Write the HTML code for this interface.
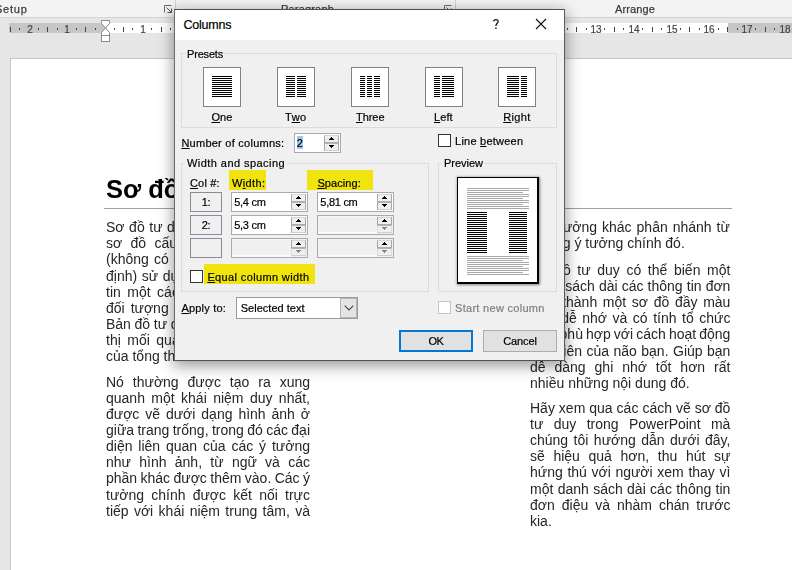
<!DOCTYPE html>
<html>
<head>
<meta charset="utf-8">
<title>Columns</title>
<style>
*{box-sizing:border-box;margin:0;padding:0}
html,body{width:792px;height:570px;overflow:hidden}
body{position:relative;background:#e6e6e6;font-family:"Liberation Sans",sans-serif;font-size:12px;color:#000}
.abs{position:absolute}
#ribbon{left:0;top:0;width:792px;height:18px;background:#f3f3f3;border-bottom:1px solid #d6d6d6}
.rlabel{position:absolute;top:1px;font-size:12px;color:#444;white-space:nowrap;line-height:14px}
.rsep{position:absolute;top:0;width:1px;height:12px;background:#cfcfcf}
#ruler{left:9px;top:23px;width:783px;height:10px;background:#fff}
#ruler .g{position:absolute;top:0;height:10px;background:#c6c6c6}
.rn{position:absolute;will-change:transform;-webkit-text-stroke-width:0.2px;font-size:10px;line-height:12px;color:#444;width:20px;text-align:center}
.tk{position:absolute;top:27px;width:1px;height:5px;background:#444}
.dt{position:absolute;top:28px;width:1px;height:2px;background:#444}
#page{left:10px;top:58px;width:800px;height:520px;background:#fff;border:1px solid #c6c6c6}
.ln{position:absolute;font-size:14px;line-height:16px;height:17px;color:#262626;white-space:nowrap;will-change:transform}
#dlg{left:174px;top:9px;width:391px;height:352px;background:#f0f0f0;border:1px solid #505050;border-left-color:#6a6a6a;border-right-color:#5c5c5c;box-shadow:0 4px 14px 1px rgba(0,0,0,.40)}
#title{left:0;top:0;width:389px;height:30px;background:#fff}
.t{position:absolute;white-space:nowrap;font-size:11px;line-height:14px;color:#000;-webkit-text-stroke-width:0.2px}
u{text-decoration:underline;text-underline-offset:1px;text-decoration-thickness:1px}
.grp{position:absolute;border:1px solid #dcdcdc}
.lg{position:absolute;padding:0 2px;background:#f0f0f0;font-size:12px;line-height:14px;white-space:nowrap}
.pbtn{position:absolute;width:38px;height:40px;background:#fff;border:1px solid #7c8190}
.pl{position:absolute;height:1px;background:#000}
.inp{position:absolute;height:20px;background:#fff;border:1px solid #7a7a7a}
.inp.dis{background:#f0f0f0;border-color:#c4c4c4}
.inp .v{position:absolute;left:4px;top:2px;font-size:12px;line-height:14px;white-space:nowrap}
.spin{position:absolute;right:0;top:0;width:16px;height:18px;background:#f0f0f0;border-left:1px solid #d0d0d0}
.cb{position:absolute;width:13px;height:13px;background:#fff;border:1px solid #333}
.btn{position:absolute;height:22px;background:#e1e1e1;border:1px solid #adadad;text-align:center;font-size:12px;line-height:19px}
.hl{position:absolute;background:#efe40e}
</style>
</head>
<body>
<div id="ribbon" class="abs">
<div class="t" style="left:-5.0px;top:2px;color:#3c3c3c;letter-spacing:0.770px;will-change:transform;-webkit-text-stroke-width:0.25px">Setup</div>
<div class="t" style="left:281px;top:2px;color:#3c3c3c;letter-spacing:0.181px;will-change:transform;-webkit-text-stroke-width:0.25px">Paragraph</div>
<div class="t" style="left:615.4px;top:2px;color:#3c3c3c;letter-spacing:0.123px;will-change:transform;-webkit-text-stroke-width:0.25px">Arrange</div>
<div class="rsep" style="left:175px"></div>
<div class="rsep" style="left:455px"></div>
<svg class="abs" style="left:164px;top:5px" width="9" height="9" viewBox="0 0 9 9"><path d="M0.5 7.5V0.5H7.5" fill="none" stroke="#6a6a6a" stroke-width="1"/><path d="M2.5 2.5L7 7M7.5 3.5V7.5H3.5" fill="none" stroke="#555" stroke-width="1"/></svg>
<svg class="abs" style="left:444px;top:5px" width="9" height="9" viewBox="0 0 9 9"><path d="M0.5 7.5V0.5H7.5" fill="none" stroke="#6a6a6a" stroke-width="1"/><path d="M2.5 2.5L7 7M7.5 3.5V7.5H3.5" fill="none" stroke="#555" stroke-width="1"/></svg>
</div>
<div id="ruler" class="abs">
<div class="g" style="left:0;width:96.5px"></div>
<div class="g" style="left:718.5px;width:80px"></div>
</div>
<div class="rn" style="left:19.6px;top:23.5px">2</div>
<div class="rn" style="left:57.3px;top:23.5px">1</div>
<div class="rn" style="left:132.9px;top:23.5px">1</div>
<div class="rn" style="left:170.6px;top:23.5px">2</div>
<div class="rn" style="left:208.4px;top:23.5px">3</div>
<div class="rn" style="left:246.1px;top:23.5px">4</div>
<div class="rn" style="left:283.9px;top:23.5px">5</div>
<div class="rn" style="left:321.7px;top:23.5px">6</div>
<div class="rn" style="left:359.4px;top:23.5px">7</div>
<div class="rn" style="left:397.2px;top:23.5px">8</div>
<div class="rn" style="left:434.9px;top:23.5px">9</div>
<div class="rn" style="left:472.7px;top:23.5px">10</div>
<div class="rn" style="left:510.5px;top:23.5px">11</div>
<div class="rn" style="left:548.2px;top:23.5px">12</div>
<div class="rn" style="left:586.0px;top:23.5px">13</div>
<div class="rn" style="left:623.7px;top:23.5px">14</div>
<div class="rn" style="left:661.5px;top:23.5px">15</div>
<div class="rn" style="left:699.3px;top:23.5px">16</div>
<div class="rn" style="left:737.0px;top:23.5px">17</div>
<div class="rn" style="left:774.8px;top:23.5px">18</div>
<div class="tk" style="left:10px"></div>
<div class="dt" style="left:19px"></div>
<div class="dt" style="left:38px"></div>
<div class="tk" style="left:47px"></div>
<div class="dt" style="left:57px"></div>
<div class="dt" style="left:76px"></div>
<div class="tk" style="left:85px"></div>
<div class="dt" style="left:95px"></div>
<div class="dt" style="left:114px"></div>
<div class="tk" style="left:123px"></div>
<div class="dt" style="left:132px"></div>
<div class="dt" style="left:151px"></div>
<div class="tk" style="left:161px"></div>
<div class="dt" style="left:170px"></div>
<div class="dt" style="left:189px"></div>
<div class="tk" style="left:199px"></div>
<div class="dt" style="left:208px"></div>
<div class="dt" style="left:227px"></div>
<div class="tk" style="left:236px"></div>
<div class="dt" style="left:246px"></div>
<div class="dt" style="left:265px"></div>
<div class="tk" style="left:274px"></div>
<div class="dt" style="left:283px"></div>
<div class="dt" style="left:302px"></div>
<div class="tk" style="left:312px"></div>
<div class="dt" style="left:321px"></div>
<div class="dt" style="left:340px"></div>
<div class="tk" style="left:350px"></div>
<div class="dt" style="left:359px"></div>
<div class="dt" style="left:378px"></div>
<div class="tk" style="left:387px"></div>
<div class="dt" style="left:397px"></div>
<div class="dt" style="left:416px"></div>
<div class="tk" style="left:425px"></div>
<div class="dt" style="left:435px"></div>
<div class="dt" style="left:453px"></div>
<div class="tk" style="left:463px"></div>
<div class="dt" style="left:472px"></div>
<div class="dt" style="left:491px"></div>
<div class="tk" style="left:501px"></div>
<div class="dt" style="left:510px"></div>
<div class="dt" style="left:529px"></div>
<div class="tk" style="left:538px"></div>
<div class="dt" style="left:548px"></div>
<div class="dt" style="left:567px"></div>
<div class="tk" style="left:576px"></div>
<div class="dt" style="left:586px"></div>
<div class="dt" style="left:604px"></div>
<div class="tk" style="left:614px"></div>
<div class="dt" style="left:623px"></div>
<div class="dt" style="left:642px"></div>
<div class="tk" style="left:652px"></div>
<div class="dt" style="left:661px"></div>
<div class="dt" style="left:680px"></div>
<div class="tk" style="left:689px"></div>
<div class="dt" style="left:699px"></div>
<div class="dt" style="left:718px"></div>
<div class="tk" style="left:727px"></div>
<div class="dt" style="left:737px"></div>
<div class="dt" style="left:755px"></div>
<div class="tk" style="left:765px"></div>
<div class="dt" style="left:774px"></div>
<div class="dt" style="left:793px"></div>
<svg class="abs" style="left:100px;top:19px" width="12" height="24" viewBox="100 19 12 24"><path d="M101.5 20.5H109.5V23.5L105.5 28L101.5 23.5Z" fill="#fff" stroke="#8c8c8c"/><path d="M105.5 28L109.5 32.5V35.5H101.5V32.5Z" fill="#fff" stroke="#8c8c8c"/><rect x="101.5" y="35.5" width="8" height="6" fill="#fff" stroke="#8c8c8c"/></svg>
<div id="page" class="abs"></div>
<div class="abs" style="left:106.2px;top:173.6px;font-size:25.5px;line-height:30px;font-weight:bold;color:#000;white-space:nowrap;will-change:transform">Sơ đồ tư duy là gì?</div>
<div class="abs" style="left:104px;top:208px;width:628px;height:1px;background:#97a1b0"></div>
<div class="ln" style="left:106.2px;top:219.05px;word-spacing:0.700px">Sơ đồ tư duy (Mindmap) là một dạng</div>
<div class="ln" style="left:106.2px;top:235.20px;word-spacing:4.451px">sơ đồ cấu trúc phân cấp bậc</div>
<div class="ln" style="left:106.2px;top:251.35px;word-spacing:1.400px">(không có hình thức nào cố</div>
<div class="ln" style="left:106.2px;top:267.50px;word-spacing:0.700px">định) sử dụng để trực quan thông</div>
<div class="ln" style="left:106.2px;top:283.65px;word-spacing:2.600px">tin một cách tổng thể nhất</div>
<div class="ln" style="left:106.2px;top:299.80px;word-spacing:2.107px">đối tượng hoặc vấn đề nào đó.</div>
<div class="ln" style="left:106.2px;top:315.95px;word-spacing:-0.211px">Bản đồ tư duy thường được hiển</div>
<div class="ln" style="left:106.2px;top:332.10px;word-spacing:2.602px">thị mối quan hệ giữa các phần</div>
<div class="ln" style="left:106.2px;top:348.25px">của tổng thể.</div>
<div class="ln" style="left:106.2px;top:373.95px;word-spacing:5.047px">Nó thường được tạo ra xung</div>
<div class="ln" style="left:106.2px;top:390.04px;word-spacing:2.506px">quanh một khái niệm duy nhất,</div>
<div class="ln" style="left:106.2px;top:406.13px;word-spacing:2.026px">được vẽ dưới dạng hình ảnh ở</div>
<div class="ln" style="left:106.2px;top:422.22px;word-spacing:-0.510px">giữa trang trống, trong đó các đại</div>
<div class="ln" style="left:106.2px;top:438.31px;word-spacing:1.979px">diện liên quan của các ý tưởng</div>
<div class="ln" style="left:106.2px;top:454.40px;word-spacing:4.406px">như hình ảnh, từ ngữ và các</div>
<div class="ln" style="left:106.2px;top:470.49px;word-spacing:-0.482px">phần khác được thêm vào. Các ý</div>
<div class="ln" style="left:106.2px;top:486.58px;word-spacing:3.331px">tưởng chính được kết nối trực</div>
<div class="ln" style="left:106.2px;top:502.67px;word-spacing:1.474px">tiếp với khái niệm trung tâm, và</div>
<div class="ln" style="right:61.80px;top:219.05px;word-spacing:1.100px">tưởng khác phân nhánh từ</div>
<div class="ln" style="left:529.8px;top:235.45px">những ý tưởng chính đó.</div>
<div class="ln" style="left:529.8px;top:261.85px;word-spacing:2.740px">Sơ đồ tư duy có thể biến một</div>
<div class="ln" style="left:529.8px;top:277.99px;word-spacing:0.215px">danh sách dài các thông tin đơn</div>
<div class="ln" style="left:529.8px;top:294.13px;word-spacing:1.775px">điệu thành một sơ đồ đầy màu</div>
<div class="ln" style="left:529.8px;top:310.27px;word-spacing:1.629px">sắc, dễ nhớ và có tính tổ chức</div>
<div class="ln" style="left:529.8px;top:326.41px;word-spacing:-0.795px">cao, phù hợp với cách hoạt động</div>
<div class="ln" style="left:529.8px;top:342.55px;word-spacing:0.572px">tự nhiên của não bạn. Giúp bạn</div>
<div class="ln" style="left:529.8px;top:358.69px;word-spacing:5.041px">dễ dàng ghi nhớ tốt hơn rất</div>
<div class="ln" style="left:529.8px;top:374.83px">nhiều những nội dung đó.</div>
<div class="ln" style="left:529.8px;top:399.85px;word-spacing:0.082px">Hãy xem qua các cách vẽ sơ đồ</div>
<div class="ln" style="left:529.8px;top:415.98px;word-spacing:6.514px">tư duy trong PowerPoint mà</div>
<div class="ln" style="left:529.8px;top:432.11px;word-spacing:1.574px">chúng tôi hướng dẫn dưới đây,</div>
<div class="ln" style="left:529.8px;top:448.24px;word-spacing:4.752px">sẽ hiệu quả hơn, thu hút sự</div>
<div class="ln" style="left:529.8px;top:464.37px;word-spacing:0.757px">hứng thú với người xem thay vì</div>
<div class="ln" style="left:529.8px;top:480.50px;word-spacing:0.452px">một danh sách dài các thông tin</div>
<div class="ln" style="left:529.8px;top:496.63px;word-spacing:3.089px">đơn điệu và nhàm chán trước</div>
<div class="ln" style="left:529.8px;top:512.76px">kia.</div>
<div id="dlg" class="abs"><div id="title" class="abs"></div></div>
<div class="t" style="left:183.4px;top:17.6px;font-size:12.5px;letter-spacing:-0.190px">Columns</div>
<svg class="abs" style="left:492px;top:18px" width="8" height="12" viewBox="0 0 8 12"><path d="M1.7 3.4C1.7 0.9 6.2 0.9 6.2 3.3C6.2 5.3 3.9 5.4 3.9 8.1" fill="none" stroke="#111" stroke-width="1.25"/><rect x="3.2" y="9.5" width="1.4" height="1.5" fill="#111"/></svg>
<svg class="abs" style="left:535px;top:18px" width="12" height="12" viewBox="0 0 12 12"><path d="M1 1L11 11M11 1L1 11" stroke="#111" stroke-width="1.1" fill="none"/></svg>
<div class="grp" style="left:181px;top:53px;width:376px;height:75px"></div>
<div class="abs" style="left:186px;top:52px;width:38px;height:3px;background:#f0f0f0"></div>
<div class="t" style="left:187px;top:47px;letter-spacing:-0.185px">Presets</div>
<div class="pbtn" style="left:203px;top:67px"></div>
<div class="pl" style="left:212px;top:76px;width:20px"></div>
<div class="pl" style="left:212px;top:78px;width:20px"></div>
<div class="pl" style="left:212px;top:80px;width:20px"></div>
<div class="pl" style="left:212px;top:82px;width:20px"></div>
<div class="pl" style="left:212px;top:84px;width:20px"></div>
<div class="pl" style="left:212px;top:86px;width:20px"></div>
<div class="pl" style="left:212px;top:88px;width:20px"></div>
<div class="pl" style="left:212px;top:90px;width:20px"></div>
<div class="pl" style="left:212px;top:92px;width:20px"></div>
<div class="pl" style="left:212px;top:94px;width:20px"></div>
<div class="pl" style="left:212px;top:96px;width:20px"></div>
<div class="pbtn" style="left:277px;top:67px"></div>
<div class="pl" style="left:286px;top:76px;width:9px"></div>
<div class="pl" style="left:286px;top:78px;width:9px"></div>
<div class="pl" style="left:286px;top:80px;width:9px"></div>
<div class="pl" style="left:286px;top:82px;width:9px"></div>
<div class="pl" style="left:286px;top:84px;width:9px"></div>
<div class="pl" style="left:286px;top:86px;width:9px"></div>
<div class="pl" style="left:286px;top:88px;width:9px"></div>
<div class="pl" style="left:286px;top:90px;width:9px"></div>
<div class="pl" style="left:286px;top:92px;width:9px"></div>
<div class="pl" style="left:286px;top:94px;width:9px"></div>
<div class="pl" style="left:286px;top:96px;width:9px"></div>
<div class="pl" style="left:297px;top:76px;width:9px"></div>
<div class="pl" style="left:297px;top:78px;width:9px"></div>
<div class="pl" style="left:297px;top:80px;width:9px"></div>
<div class="pl" style="left:297px;top:82px;width:9px"></div>
<div class="pl" style="left:297px;top:84px;width:9px"></div>
<div class="pl" style="left:297px;top:86px;width:9px"></div>
<div class="pl" style="left:297px;top:88px;width:9px"></div>
<div class="pl" style="left:297px;top:90px;width:9px"></div>
<div class="pl" style="left:297px;top:92px;width:9px"></div>
<div class="pl" style="left:297px;top:94px;width:9px"></div>
<div class="pl" style="left:297px;top:96px;width:9px"></div>
<div class="pbtn" style="left:351px;top:67px"></div>
<div class="pl" style="left:360px;top:76px;width:5px"></div>
<div class="pl" style="left:360px;top:78px;width:5px"></div>
<div class="pl" style="left:360px;top:80px;width:5px"></div>
<div class="pl" style="left:360px;top:82px;width:5px"></div>
<div class="pl" style="left:360px;top:84px;width:5px"></div>
<div class="pl" style="left:360px;top:86px;width:5px"></div>
<div class="pl" style="left:360px;top:88px;width:5px"></div>
<div class="pl" style="left:360px;top:90px;width:5px"></div>
<div class="pl" style="left:360px;top:92px;width:5px"></div>
<div class="pl" style="left:360px;top:94px;width:5px"></div>
<div class="pl" style="left:360px;top:96px;width:5px"></div>
<div class="pl" style="left:367px;top:76px;width:5px"></div>
<div class="pl" style="left:367px;top:78px;width:5px"></div>
<div class="pl" style="left:367px;top:80px;width:5px"></div>
<div class="pl" style="left:367px;top:82px;width:5px"></div>
<div class="pl" style="left:367px;top:84px;width:5px"></div>
<div class="pl" style="left:367px;top:86px;width:5px"></div>
<div class="pl" style="left:367px;top:88px;width:5px"></div>
<div class="pl" style="left:367px;top:90px;width:5px"></div>
<div class="pl" style="left:367px;top:92px;width:5px"></div>
<div class="pl" style="left:367px;top:94px;width:5px"></div>
<div class="pl" style="left:367px;top:96px;width:5px"></div>
<div class="pl" style="left:374px;top:76px;width:6px"></div>
<div class="pl" style="left:374px;top:78px;width:6px"></div>
<div class="pl" style="left:374px;top:80px;width:6px"></div>
<div class="pl" style="left:374px;top:82px;width:6px"></div>
<div class="pl" style="left:374px;top:84px;width:6px"></div>
<div class="pl" style="left:374px;top:86px;width:6px"></div>
<div class="pl" style="left:374px;top:88px;width:6px"></div>
<div class="pl" style="left:374px;top:90px;width:6px"></div>
<div class="pl" style="left:374px;top:92px;width:6px"></div>
<div class="pl" style="left:374px;top:94px;width:6px"></div>
<div class="pl" style="left:374px;top:96px;width:6px"></div>
<div class="pbtn" style="left:425px;top:67px"></div>
<div class="pl" style="left:434px;top:76px;width:6px"></div>
<div class="pl" style="left:434px;top:78px;width:6px"></div>
<div class="pl" style="left:434px;top:80px;width:6px"></div>
<div class="pl" style="left:434px;top:82px;width:6px"></div>
<div class="pl" style="left:434px;top:84px;width:6px"></div>
<div class="pl" style="left:434px;top:86px;width:6px"></div>
<div class="pl" style="left:434px;top:88px;width:6px"></div>
<div class="pl" style="left:434px;top:90px;width:6px"></div>
<div class="pl" style="left:434px;top:92px;width:6px"></div>
<div class="pl" style="left:434px;top:94px;width:6px"></div>
<div class="pl" style="left:434px;top:96px;width:6px"></div>
<div class="pl" style="left:442px;top:76px;width:12px"></div>
<div class="pl" style="left:442px;top:78px;width:12px"></div>
<div class="pl" style="left:442px;top:80px;width:12px"></div>
<div class="pl" style="left:442px;top:82px;width:12px"></div>
<div class="pl" style="left:442px;top:84px;width:12px"></div>
<div class="pl" style="left:442px;top:86px;width:12px"></div>
<div class="pl" style="left:442px;top:88px;width:12px"></div>
<div class="pl" style="left:442px;top:90px;width:12px"></div>
<div class="pl" style="left:442px;top:92px;width:12px"></div>
<div class="pl" style="left:442px;top:94px;width:12px"></div>
<div class="pl" style="left:442px;top:96px;width:12px"></div>
<div class="pbtn" style="left:498px;top:67px"></div>
<div class="pl" style="left:507px;top:76px;width:12px"></div>
<div class="pl" style="left:507px;top:78px;width:12px"></div>
<div class="pl" style="left:507px;top:80px;width:12px"></div>
<div class="pl" style="left:507px;top:82px;width:12px"></div>
<div class="pl" style="left:507px;top:84px;width:12px"></div>
<div class="pl" style="left:507px;top:86px;width:12px"></div>
<div class="pl" style="left:507px;top:88px;width:12px"></div>
<div class="pl" style="left:507px;top:90px;width:12px"></div>
<div class="pl" style="left:507px;top:92px;width:12px"></div>
<div class="pl" style="left:507px;top:94px;width:12px"></div>
<div class="pl" style="left:507px;top:96px;width:12px"></div>
<div class="pl" style="left:521px;top:76px;width:6px"></div>
<div class="pl" style="left:521px;top:78px;width:6px"></div>
<div class="pl" style="left:521px;top:80px;width:6px"></div>
<div class="pl" style="left:521px;top:82px;width:6px"></div>
<div class="pl" style="left:521px;top:84px;width:6px"></div>
<div class="pl" style="left:521px;top:86px;width:6px"></div>
<div class="pl" style="left:521px;top:88px;width:6px"></div>
<div class="pl" style="left:521px;top:90px;width:6px"></div>
<div class="pl" style="left:521px;top:92px;width:6px"></div>
<div class="pl" style="left:521px;top:94px;width:6px"></div>
<div class="pl" style="left:521px;top:96px;width:6px"></div>
<div class="t" style="left:211.4px;top:110px;letter-spacing:0.062px"><u>O</u>ne</div>
<div class="t" style="left:285px;top:110px;letter-spacing:0.499px">T<u>w</u>o</div>
<div class="t" style="left:356px;top:110px;letter-spacing:-0.053px"><u>T</u>hree</div>
<div class="t" style="left:434px;top:110px;letter-spacing:0.085px"><u>L</u>eft</div>
<div class="t" style="left:503.2px;top:110px;letter-spacing:0.339px"><u>R</u>ight</div>
<div class="t" style="left:181.4px;top:135.5px;letter-spacing:0.253px"><u>N</u>umber of columns:</div>
<div class="abs" style="left:294px;top:133px;width:47px;height:20px;background:#fff;border:1px solid #a9a9b2"></div>
<div class="abs" style="left:297px;top:136px;width:6px;height:13px;background:#99c9ef"></div>
<div class="t" style="left:296.8px;top:136px">2</div>
<div class="abs" style="left:324px;top:135px;width:15px;height:8px;background:#efefef;border:1px solid #a6a6a6;border-top-color:#d6d6d6;border-bottom-color:#acacac"></div>
<div class="abs" style="left:324px;top:143px;width:15px;height:8px;background:#efefef;border:1px solid #a6a6a6;border-top-color:#b4b4b4;border-bottom-color:#cfcfcf"></div>
<svg class="abs" style="left:329px;top:137px" width="5" height="3" viewBox="0 0 5 3" shape-rendering="crispEdges"><path d="M2 0h1v1h1v1h1v1h-5v-1h1v-1h1z" fill="#000"/></svg>
<svg class="abs" style="left:329px;top:145px" width="5" height="3" viewBox="0 0 5 3" shape-rendering="crispEdges"><path d="M0 0h5v1h-1v1h-1v1h-1v-1h-1v-1h-1z" fill="#000"/></svg>
<div class="cb" style="left:438px;top:134px"></div>
<div class="t" style="left:455.1px;top:134px;letter-spacing:0.228px">Line <u>b</u>etween</div>
<div class="grp" style="left:181px;top:163px;width:248px;height:129px"></div>
<div class="abs" style="left:185px;top:162px;width:102px;height:3px;background:#f0f0f0"></div>
<div class="t" style="left:187px;top:156px;letter-spacing:0.441px">Width and spacing</div>
<div class="hl" style="left:229px;top:170px;width:37px;height:20px"></div>
<div class="hl" style="left:307px;top:170px;width:66px;height:20px"></div>
<div class="t" style="left:190px;top:176px;letter-spacing:0.158px"><u>C</u>ol #:</div>
<div class="t" style="left:231.9px;top:176px;letter-spacing:0.399px">W<u>i</u>dth:</div>
<div class="t" style="left:317.4px;top:176px;letter-spacing:0.071px"><u>S</u>pacing:</div>
<div class="abs" style="left:190px;top:192px;width:32px;height:20px;background:#f0f0f0;border:1px solid #8a8c99"></div>
<div class="t" style="left:201.8px;top:195px;letter-spacing:-0.444px">1:</div>
<div class="abs" style="left:231px;top:192px;width:77px;height:20px;background:#fff;border:1px solid #a9a9b2"></div>
<div class="t" style="left:234.2px;top:195px;letter-spacing:-0.253px">5,4 cm</div>
<div class="abs" style="left:291px;top:194px;width:15px;height:8px;background:#efefef;border:1px solid #a6a6a6;border-top-color:#d6d6d6;border-bottom-color:#acacac"></div>
<div class="abs" style="left:291px;top:202px;width:15px;height:8px;background:#efefef;border:1px solid #a6a6a6;border-top-color:#b4b4b4;border-bottom-color:#cfcfcf"></div>
<svg class="abs" style="left:296px;top:196px" width="5" height="3" viewBox="0 0 5 3" shape-rendering="crispEdges"><path d="M2 0h1v1h1v1h1v1h-5v-1h1v-1h1z" fill="#000"/></svg>
<svg class="abs" style="left:296px;top:204px" width="5" height="3" viewBox="0 0 5 3" shape-rendering="crispEdges"><path d="M0 0h5v1h-1v1h-1v1h-1v-1h-1v-1h-1z" fill="#000"/></svg>
<div class="abs" style="left:317px;top:192px;width:77px;height:20px;background:#fff;border:1px solid #a9a9b2"></div>
<div class="t" style="left:320.3px;top:195px;letter-spacing:-0.277px">5,81 cm</div>
<div class="abs" style="left:377px;top:194px;width:15px;height:8px;background:#efefef;border:1px solid #a6a6a6;border-top-color:#d6d6d6;border-bottom-color:#acacac"></div>
<div class="abs" style="left:377px;top:202px;width:15px;height:8px;background:#efefef;border:1px solid #a6a6a6;border-top-color:#b4b4b4;border-bottom-color:#cfcfcf"></div>
<svg class="abs" style="left:382px;top:196px" width="5" height="3" viewBox="0 0 5 3" shape-rendering="crispEdges"><path d="M2 0h1v1h1v1h1v1h-5v-1h1v-1h1z" fill="#000"/></svg>
<svg class="abs" style="left:382px;top:204px" width="5" height="3" viewBox="0 0 5 3" shape-rendering="crispEdges"><path d="M0 0h5v1h-1v1h-1v1h-1v-1h-1v-1h-1z" fill="#000"/></svg>
<div class="abs" style="left:190px;top:215px;width:32px;height:20px;background:#f0f0f0;border:1px solid #8a8c99"></div>
<div class="t" style="left:201.8px;top:218px;letter-spacing:-0.444px">2:</div>
<div class="abs" style="left:231px;top:215px;width:77px;height:20px;background:#fff;border:1px solid #a9a9b2"></div>
<div class="t" style="left:234.2px;top:218px;letter-spacing:-0.253px">5,3 cm</div>
<div class="abs" style="left:291px;top:217px;width:15px;height:8px;background:#efefef;border:1px solid #a6a6a6;border-top-color:#d6d6d6;border-bottom-color:#acacac"></div>
<div class="abs" style="left:291px;top:225px;width:15px;height:8px;background:#efefef;border:1px solid #a6a6a6;border-top-color:#b4b4b4;border-bottom-color:#cfcfcf"></div>
<svg class="abs" style="left:296px;top:219px" width="5" height="3" viewBox="0 0 5 3" shape-rendering="crispEdges"><path d="M2 0h1v1h1v1h1v1h-5v-1h1v-1h1z" fill="#000"/></svg>
<svg class="abs" style="left:296px;top:227px" width="5" height="3" viewBox="0 0 5 3" shape-rendering="crispEdges"><path d="M0 0h5v1h-1v1h-1v1h-1v-1h-1v-1h-1z" fill="#000"/></svg>
<div class="abs" style="left:317px;top:215px;width:77px;height:20px;background:#f0f0f0;border:1px solid #a9a9b2"></div>
<div class="abs" style="left:318px;top:232px;width:59px;height:2px;background:#fbfbfb"></div>
<div class="abs" style="left:318px;top:216px;width:59px;height:1px;background:#f7f7f7"></div>
<div class="abs" style="left:377px;top:217px;width:15px;height:8px;background:#efefef;border:1px solid #a6a6a6;border-top-color:#d6d6d6;border-bottom-color:#acacac"></div>
<div class="abs" style="left:377px;top:225px;width:15px;height:8px;background:#efefef;border:1px solid #dcdcdc;border-top-color:#b4b4b4;border-bottom-color:#cfcfcf"></div>
<svg class="abs" style="left:382px;top:219px" width="5" height="3" viewBox="0 0 5 3" shape-rendering="crispEdges"><path d="M2 0h1v1h1v1h1v1h-5v-1h1v-1h1z" fill="#000"/></svg>
<svg class="abs" style="left:382px;top:227px" width="5" height="3" viewBox="0 0 5 3" shape-rendering="crispEdges"><path d="M0 0h5v1h-1v1h-1v1h-1v-1h-1v-1h-1z" fill="#858585"/></svg>
<div class="abs" style="left:190px;top:238px;width:32px;height:20px;background:#f0f0f0;border:1px solid #8a8c99"></div>
<div class="abs" style="left:231px;top:238px;width:77px;height:20px;background:#f0f0f0;border:1px solid #a9a9b2"></div>
<div class="abs" style="left:232px;top:255px;width:59px;height:2px;background:#fbfbfb"></div>
<div class="abs" style="left:232px;top:239px;width:59px;height:1px;background:#f7f7f7"></div>
<div class="abs" style="left:291px;top:240px;width:15px;height:8px;background:#efefef;border:1px solid #a6a6a6;border-top-color:#d6d6d6;border-bottom-color:#acacac"></div>
<div class="abs" style="left:291px;top:248px;width:15px;height:8px;background:#efefef;border:1px solid #dcdcdc;border-top-color:#b4b4b4;border-bottom-color:#cfcfcf"></div>
<svg class="abs" style="left:296px;top:242px" width="5" height="3" viewBox="0 0 5 3" shape-rendering="crispEdges"><path d="M2 0h1v1h1v1h1v1h-5v-1h1v-1h1z" fill="#000"/></svg>
<svg class="abs" style="left:296px;top:250px" width="5" height="3" viewBox="0 0 5 3" shape-rendering="crispEdges"><path d="M0 0h5v1h-1v1h-1v1h-1v-1h-1v-1h-1z" fill="#858585"/></svg>
<div class="abs" style="left:317px;top:238px;width:77px;height:20px;background:#f0f0f0;border:1px solid #a9a9b2"></div>
<div class="abs" style="left:318px;top:255px;width:59px;height:2px;background:#fbfbfb"></div>
<div class="abs" style="left:318px;top:239px;width:59px;height:1px;background:#f7f7f7"></div>
<div class="abs" style="left:377px;top:240px;width:15px;height:8px;background:#efefef;border:1px solid #a6a6a6;border-top-color:#d6d6d6;border-bottom-color:#acacac"></div>
<div class="abs" style="left:377px;top:248px;width:15px;height:8px;background:#efefef;border:1px solid #dcdcdc;border-top-color:#b4b4b4;border-bottom-color:#cfcfcf"></div>
<svg class="abs" style="left:382px;top:242px" width="5" height="3" viewBox="0 0 5 3" shape-rendering="crispEdges"><path d="M2 0h1v1h1v1h1v1h-5v-1h1v-1h1z" fill="#000"/></svg>
<svg class="abs" style="left:382px;top:250px" width="5" height="3" viewBox="0 0 5 3" shape-rendering="crispEdges"><path d="M0 0h5v1h-1v1h-1v1h-1v-1h-1v-1h-1z" fill="#858585"/></svg>
<div class="hl" style="left:204px;top:264px;width:111px;height:20px"></div>
<div class="cb" style="left:190px;top:270px"></div>
<div class="t" style="left:207.4px;top:270px;letter-spacing:0.366px"><u>E</u>qual column width</div>
<div class="grp" style="left:438px;top:163px;width:119px;height:129px"></div>
<div class="abs" style="left:442px;top:162px;width:42px;height:3px;background:#f0f0f0"></div>
<div class="t" style="left:444px;top:156px;letter-spacing:-0.018px">Preview</div>
<div class="abs" style="left:457px;top:177px;width:82px;height:107px;background:#fff;border:1px solid #000;border-right-width:2px;border-bottom-width:2px;box-shadow:0 0 2.5px 0.5px rgba(0,0,0,.45)"></div>
<div class="abs" style="left:467px;top:188px;width:62px;height:1px;background:#a8a8a8"></div>
<div class="abs" style="left:467px;top:190px;width:62px;height:1px;background:#a8a8a8"></div>
<div class="abs" style="left:467px;top:192px;width:56px;height:1px;background:#a8a8a8"></div>
<div class="abs" style="left:467px;top:194px;width:62px;height:1px;background:#a8a8a8"></div>
<div class="abs" style="left:467px;top:196px;width:62px;height:1px;background:#a8a8a8"></div>
<div class="abs" style="left:467px;top:198px;width:56px;height:1px;background:#a8a8a8"></div>
<div class="abs" style="left:467px;top:200px;width:62px;height:1px;background:#a8a8a8"></div>
<div class="abs" style="left:467px;top:202px;width:62px;height:1px;background:#a8a8a8"></div>
<div class="abs" style="left:467px;top:204px;width:56px;height:1px;background:#a8a8a8"></div>
<div class="abs" style="left:467px;top:206px;width:62px;height:1px;background:#a8a8a8"></div>
<div class="abs" style="left:467px;top:208px;width:62px;height:1px;background:#a8a8a8"></div>
<div class="abs" style="left:467px;top:256px;width:62px;height:1px;background:#a8a8a8"></div>
<div class="abs" style="left:467px;top:258px;width:62px;height:1px;background:#a8a8a8"></div>
<div class="abs" style="left:467px;top:260px;width:56px;height:1px;background:#a8a8a8"></div>
<div class="abs" style="left:467px;top:262px;width:62px;height:1px;background:#a8a8a8"></div>
<div class="abs" style="left:467px;top:264px;width:62px;height:1px;background:#a8a8a8"></div>
<div class="abs" style="left:467px;top:266px;width:56px;height:1px;background:#a8a8a8"></div>
<div class="abs" style="left:467px;top:268px;width:62px;height:1px;background:#a8a8a8"></div>
<div class="abs" style="left:467px;top:270px;width:62px;height:1px;background:#a8a8a8"></div>
<div class="abs" style="left:467px;top:272px;width:56px;height:1px;background:#a8a8a8"></div>
<div class="abs" style="left:467px;top:274px;width:62px;height:1px;background:#a8a8a8"></div>
<div class="abs" style="left:467px;top:212px;width:20px;height:1px;background:#000"></div>
<div class="abs" style="left:509px;top:212px;width:18px;height:1px;background:#000"></div>
<div class="abs" style="left:467px;top:214px;width:20px;height:1px;background:#000"></div>
<div class="abs" style="left:509px;top:214px;width:18px;height:1px;background:#000"></div>
<div class="abs" style="left:467px;top:216px;width:20px;height:1px;background:#000"></div>
<div class="abs" style="left:509px;top:216px;width:18px;height:1px;background:#000"></div>
<div class="abs" style="left:467px;top:218px;width:20px;height:1px;background:#000"></div>
<div class="abs" style="left:509px;top:218px;width:18px;height:1px;background:#000"></div>
<div class="abs" style="left:467px;top:220px;width:20px;height:1px;background:#000"></div>
<div class="abs" style="left:509px;top:220px;width:18px;height:1px;background:#000"></div>
<div class="abs" style="left:467px;top:222px;width:20px;height:1px;background:#000"></div>
<div class="abs" style="left:509px;top:222px;width:18px;height:1px;background:#000"></div>
<div class="abs" style="left:467px;top:224px;width:20px;height:1px;background:#000"></div>
<div class="abs" style="left:509px;top:224px;width:18px;height:1px;background:#000"></div>
<div class="abs" style="left:467px;top:226px;width:20px;height:1px;background:#000"></div>
<div class="abs" style="left:509px;top:226px;width:18px;height:1px;background:#000"></div>
<div class="abs" style="left:467px;top:228px;width:20px;height:1px;background:#000"></div>
<div class="abs" style="left:509px;top:228px;width:18px;height:1px;background:#000"></div>
<div class="abs" style="left:467px;top:230px;width:20px;height:1px;background:#000"></div>
<div class="abs" style="left:509px;top:230px;width:18px;height:1px;background:#000"></div>
<div class="abs" style="left:467px;top:232px;width:20px;height:1px;background:#000"></div>
<div class="abs" style="left:509px;top:232px;width:18px;height:1px;background:#000"></div>
<div class="abs" style="left:467px;top:234px;width:20px;height:1px;background:#000"></div>
<div class="abs" style="left:509px;top:234px;width:18px;height:1px;background:#000"></div>
<div class="abs" style="left:467px;top:236px;width:20px;height:1px;background:#000"></div>
<div class="abs" style="left:509px;top:236px;width:18px;height:1px;background:#000"></div>
<div class="abs" style="left:467px;top:238px;width:20px;height:1px;background:#000"></div>
<div class="abs" style="left:509px;top:238px;width:18px;height:1px;background:#000"></div>
<div class="abs" style="left:467px;top:240px;width:20px;height:1px;background:#000"></div>
<div class="abs" style="left:509px;top:240px;width:18px;height:1px;background:#000"></div>
<div class="abs" style="left:467px;top:242px;width:20px;height:1px;background:#000"></div>
<div class="abs" style="left:509px;top:242px;width:18px;height:1px;background:#000"></div>
<div class="abs" style="left:467px;top:244px;width:20px;height:1px;background:#000"></div>
<div class="abs" style="left:509px;top:244px;width:18px;height:1px;background:#000"></div>
<div class="abs" style="left:467px;top:246px;width:20px;height:1px;background:#000"></div>
<div class="abs" style="left:509px;top:246px;width:18px;height:1px;background:#000"></div>
<div class="abs" style="left:467px;top:248px;width:20px;height:1px;background:#000"></div>
<div class="abs" style="left:509px;top:248px;width:18px;height:1px;background:#000"></div>
<div class="abs" style="left:467px;top:250px;width:20px;height:1px;background:#000"></div>
<div class="abs" style="left:509px;top:250px;width:18px;height:1px;background:#000"></div>
<div class="abs" style="left:467px;top:252px;width:20px;height:1px;background:#000"></div>
<div class="abs" style="left:509px;top:252px;width:18px;height:1px;background:#000"></div>
<div class="t" style="left:181.4px;top:301px;letter-spacing:0.199px"><u>A</u>pply to:</div>
<div class="abs" style="left:236px;top:297px;width:122px;height:22px;background:#fff;border:1px solid #9a9a9a"></div>
<div class="abs" style="left:340px;top:298px;width:17px;height:20px;background:#e4e4e4;border:1px solid #b4b4b4"></div>
<svg class="abs" style="left:344px;top:305px" width="10" height="6" viewBox="0 0 10 6"><path d="M0.7 0.7L5 5L9.3 0.7" fill="none" stroke="#444" stroke-width="1.1"/></svg>
<div class="t" style="left:240.7px;top:301px;letter-spacing:0.024px">Selected text</div>
<div class="cb" style="left:438px;top:301px;border-color:#c4c4c4"></div>
<div class="t" style="left:455.0px;top:301px;color:#7e7e7e;letter-spacing:0.295px">Start new column</div>
<div class="btn" style="left:399px;top:330px;width:74px;border:2px solid #0078d7"></div>
<div class="t" style="left:428.6px;top:334px;letter-spacing:-0.653px">OK</div>
<div class="btn" style="left:483px;top:330px;width:74px"></div>
<div class="t" style="left:503.3px;top:334px;letter-spacing:-0.142px">Cancel</div>
</body>
</html>
